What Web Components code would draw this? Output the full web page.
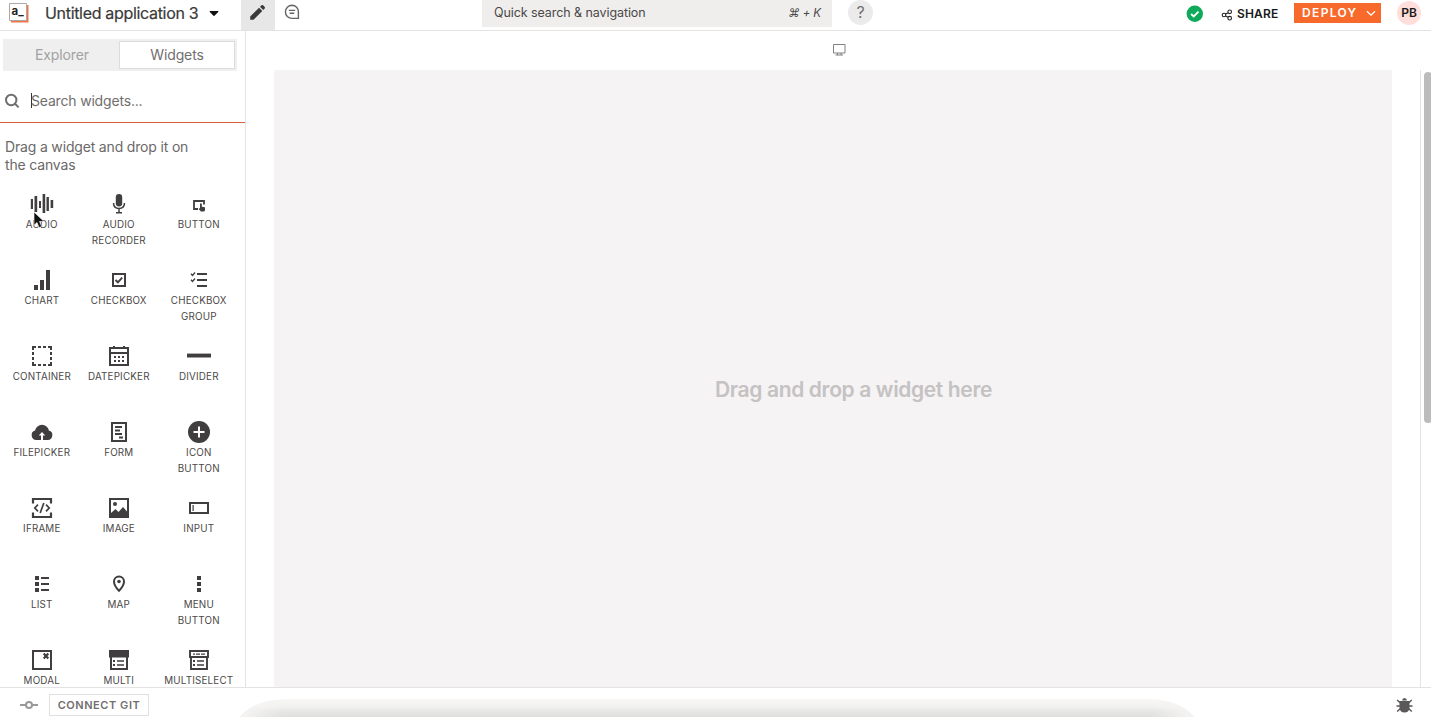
<!DOCTYPE html>
<html lang="en">
<head>
<meta charset="utf-8">
<title>Untitled application 3</title>
<style>
html,body{margin:0;height:100%;overflow:hidden;background:#fff}
body{font-family:Inter,"Open Sans",sans-serif;color:#4b4848}
</style>
</head>
<body>
<app-editor></app-editor>
<script>
const define = (name, html) => customElements.define(name, class extends HTMLElement {
  constructor() {
    super();
    const t = document.createElement('template');
    t.innerHTML = html;
    this.attachShadow({mode: 'open'}).append(t.content.cloneNode(true));
  }
});

define('app-header', `
<style>
:host{display:flex;height:30px;border-bottom:1px solid #e3e3e3;flex:none;background:#fff;overflow:hidden}
svg{display:block;flex:none}
.left{display:flex;width:482px;flex:none}
.logo{margin:3px 0 0 9px}
.name{margin-left:16px;width:154px;font-size:16px;line-height:27px;color:#393939;-webkit-text-stroke:.2px #393939;white-space:nowrap;letter-spacing:-.32px}
.caret{margin:11px 0 0 10px}
.edit{margin-left:22px;width:34px;height:30px;background:#e7e7e7}
.chat{margin:4px 0 0 9px}
.search{display:flex;justify-content:space-between;box-sizing:border-box;width:350px;height:27px;background:#efeeed;padding:0 11px 0 12px;font-size:12.5px;line-height:26px;letter-spacing:-.08px;color:#4b4848;white-space:nowrap}
.search i{font-size:11.5px;letter-spacing:-.1px}
.help{margin-left:16px;width:25px;height:25px;border-radius:50%;background:#ebebeb;font-size:16px;line-height:25px;text-align:center;color:#716e6e}
.right{display:flex;margin-left:auto}
.ok{margin-top:5px}
.share-icon{margin:9px 0 0 18px}
.share{margin-left:4px;width:42px;font-size:12px;font-weight:600;line-height:28px;letter-spacing:.15px;color:#191919}
.deploy{display:flex;box-sizing:border-box;margin:3px 0 0 15px;width:87px;height:20px;background:#f86a2b;color:#fff;font-size:12px;font-weight:600;line-height:20px;letter-spacing:1.35px;padding-left:8px}
.deploy svg{margin:7px 5px 0 auto}
.avatar{width:24px;height:24px;border-radius:50%;background:#ffdedb;margin:1px 10px 0 16px;font-size:12px;font-weight:600;line-height:24px;text-align:center;color:#191919}
</style>
<div class="left">
<svg class="logo" width="20" height="20"><path d="M2 2h17.500v17.500H2z" fill="#f3744a"/><path d="M.5.5h17v17H.5z" fill="#fff" stroke="#a9a9a9"/><text x="2.500" y="12" font-family="Inter,sans-serif" font-size="11.500" font-weight="700" fill="#222">a_</text></svg>
<div class="name">Untitled application 3</div>
<svg class="caret" width="10" height="6"><path d="M1.2 0h7.6q1.2 0 .4 1L5.8 4.6q-.8.8-1.6 0L.8 1Q0 0 1.2 0z" fill="#111"/></svg>
<div class="edit"><svg width="34" height="30"><path d="M9.2 19.8v-3.3l8.9-8.8 3.2 3.2-8.8 8.9zM19 6.8l1.5-1.5q.8-.7 1.6 0l1.6 1.6q.7.8 0 1.6L22.2 10z" fill="#3b3939"/></svg></div>
<svg class="chat" width="16" height="16" fill="none" stroke="#676464" stroke-width="1.4"><path d="M8 1.2a6.6 6.6 0 1 0 0 13.2h6.4V8A6.5 6.5 0 0 0 8 1.2zM4.8 6.4h6.4M5.6 9.3h4.6"/></svg>
</div>
<div class="search"><span>Quick search &amp; navigation</span><i>⌘ + K</i></div>
<div class="help">?</div>
<div class="right">
<svg class="ok" width="17" height="17"><circle cx="8.8" cy="8.8" r="8.2" fill="#0ea95b"/><path d="M5.1 9l2.6 2.5 4.8-4.8" fill="none" stroke="#fff" stroke-width="1.8"/></svg>
<svg class="share-icon" width="12" height="12" fill="none" stroke="#222" stroke-width="1.1"><circle cx="3" cy="6" r="1.8"/><circle cx="8.700" cy="2.8" r="1.8"/><circle cx="8.700" cy="9.2" r="1.8"/><path d="M4.6 5.1l2.5-1.4M4.6 6.9l2.5 1.4"/></svg>
<div class="share">SHARE</div>
<div class="deploy">DEPLOY<svg width="10" height="7"><path d="M1 1.2l4 4 4-4" fill="none" stroke="#fff" stroke-width="1.3"/></svg></div>
<div class="avatar">PB</div>
</div>`);

const icons = {
  audio: '<path d="M.8 7H3v10H.8zM4.5 4h2.700v16H4.500zM9 9h2v7H9zM12.600 2h2.600v19h-2.600zM16.500 5h2.400v14h-2.400zM20.600 8H23.200v8h-2.600z"/>',
  recorder: '<rect x="8.800" y="2" width="6.400" height="12.500" rx="3.200"/><path d="M6.500 11q.2 5.500 5.500 5.500t5.500-5.500M12 16.500v4M9 20.800h6" fill="none" stroke="#403e3e" stroke-width="1.500"/>',
  button: '<path d="M11 17H7V9h10v3.500" fill="none" stroke="#403e3e" stroke-width="1.800"/><path d="M13 11.500h1.800v3.200l3.200.6v3l-.8 1.200h-3.200l-2.400-2.500.6-.8.8.4z"/>',
  chart: '<path d="M4 17h4v5H4zM10 12h4v10h-4zM16 2h4v20h-4z"/>',
  checkbox: '<path d="M6 6h12v12H6z" fill="none" stroke="#403e3e" stroke-width="2"/><path d="M8.500 12l2.400 2.300 4.300-4.600" fill="none" stroke="#403e3e" stroke-width="1.900"/>',
  checks: '<path d="M10 5h10v2H10zM10 11h10v2H10zM10 17h10v2H10z"/><path d="M4 5.800l1.500 1.600L8 4.500M4 11.800l1.500 1.600L8 10.500" fill="none" stroke="#403e3e" stroke-width="1.400"/>',
  container: '<path d="M2 2h4v2H4v2H2zM8 2h3v2H8zM13 2h3v2h-3zM18 2h4v4h-2V4h-2zM2 8h2v3H2zM2 13h2v3H2zM20 8h2v3h-2zM20 13h2v3h-2zM2 18h2v2h2v2H2zM8 20h3v2H8zM13 20h3v2h-3zM18 20h2v-2h2v4h-4z"/>',
  date: '<path d="M3 4h18v17H3zM3 9h18" fill="none" stroke="#403e3e" stroke-width="2"/><path d="M6 2h2v3H6zM16 2h2v3h-2zM7 12h2v2H7zM11 12h2v2h-2zM15 12h2v2h-2zM7 16h2v2H7zM11 16h2v2h-2zM15 16h2v2h-2z"/>',
  divider: '<path d="M0 9.600h24v3.900H0z"/>',
  file: '<path d="M6.200 20a4.800 4.800 0 0 1-1.100-9.400 7 7 0 0 1 13.800 0A4.800 4.800 0 0 1 17.800 20z"/><path d="M12 20v-6" stroke="#fff" stroke-width="2"/><path d="M8.800 15.500L12 12l3.200 3.500z" fill="#fff"/>',
  form: '<path d="M5 3h14v18H5z" fill="none" stroke="#403e3e" stroke-width="2"/><path d="M8 6h7v2H8zM8 9.500h5v2H8zM8 13h7v2H8zM12 16.500h4v2h-4z"/>',
  plus: '<circle cx="12" cy="12" r="11"/><path d="M12 6.500v11M6.500 12h11" stroke="#fff" stroke-width="2"/>',
  iframe: '<path d="M3 7.500V3h18v4.500M3 16.500V21h18v-4.500" fill="none" stroke="#403e3e" stroke-width="2.200"/><path d="M8 8.700L4.800 12 8 15.300M16 8.700l3.200 3.300-3.200 3.300M13.800 7l-3.600 10" fill="none" stroke="#403e3e" stroke-width="1.700"/>',
  image: '<path d="M2 2h20v20H2zM4 4v13l4.500-4 3 3 4.500-5 4 4.500V4z" fill-rule="evenodd"/><circle cx="8" cy="8" r="2"/>',
  input: '<path d="M3 7h18v10H3z" fill="none" stroke="#403e3e" stroke-width="2"/><path d="M5.500 9h1.200v6H5.500z"/>',
  list: '<path d="M5 4h4v4H5zM5 10h4v4H5zM5 16h4v4H5zM11 5h8v2h-8zM11 11h8v2h-8zM11 17h8v2h-8z"/>',
  map: '<path d="M12 18.800Q7 13.700 7 9.500a5 5 0 0 1 10 0Q17 13.700 12 18.800z" fill="none" stroke="#403e3e" stroke-width="2"/><circle cx="12" cy="9.500" r="1.800"/>',
  menu: '<path d="M10 4h4v4h-4zM10 10h4v4h-4zM10 16h4v4h-4z"/>',
  modal: '<path d="M3 3h18v18H3z" fill="none" stroke="#403e3e" stroke-width="2"/><path d="M13.700 5.500l4.600 5M18.300 5.500l-4.600 5" stroke="#403e3e" stroke-width="2.200"/>',
  multi: '<path d="M2 2h20v7.500H2z"/><path d="M4 8v13h16V8" fill="none" stroke="#403e3e" stroke-width="2"/><path d="M6 12h2v2H6zM10 12.300h7v1.400h-7zM6 16h2v2H6zM10 16.300h7v1.400h-7z"/>',
  select: '<path d="M3 3h18v6H3zM4 9v12h16V9" fill="none" stroke="#403e3e" stroke-width="1.900"/><path d="M6 5.400h2v1.400H6zM9 5.400h4v1.400H9zM14 5.400h4v1.400h-4zM6 12h2v2H6zM10 12.300h7v1.400h-7zM6 16h2v2H6zM10 16.300h7v1.400h-7z"/>'
};
customElements.define('widget-card', class extends HTMLElement {
  constructor() {
    super();
    this.attachShadow({mode: 'open'}).innerHTML = `
<style>
:host{display:block;text-align:center;font-size:9.8px;line-height:16px;letter-spacing:.2px;color:#4b4848}
svg{display:block;margin:0 auto;fill:#403e3e}
div{white-space:pre-line;padding-top:1px;margin-right:.4px}
</style>
<svg width="24" height="24" viewBox="0 0 24 24">${icons[this.getAttribute('icon')]}</svg><div><slot></slot></div>`;
  }
});

define('widget-sidebar', `
<style>
:host{display:block;width:245px;flex:none;border-right:1px solid #e3e3e3;overflow:hidden;position:relative}
.tabs{display:flex;box-sizing:border-box;margin:8px 0 0 3px;width:234px;height:32px;padding:2px 2px 2px 0;background:#efefef;font-size:14px;line-height:28px;text-align:center}
.tabs span{box-sizing:border-box;width:116px;color:#a2a2a2;letter-spacing:-.13px;padding-left:2px}
.tabs .on{color:#716e6e;background:#fff;border:1px solid #dcdcd8;height:28px;line-height:26px;padding:0}
.search{display:flex;box-sizing:border-box;margin-top:9px;height:43px;border-bottom:1.500px solid #db6038;font-size:14px;line-height:42px;color:#716e6e;letter-spacing:-.18px}
.search svg{margin:13px 0 0 4px}
.search b{width:1px;height:15px;margin:13px -1px 0 11px;background:#333}
p{margin:15px 0 0 5px;width:195px;font-size:14px;line-height:18px;letter-spacing:-.17px;color:#6b6868}
.grid{display:grid;grid-template-columns:76px 78px 82px;grid-auto-rows:76px;padding-left:4px;margin-top:18px}
.cursor{position:absolute;left:33px;top:180px}
</style>
<div class="tabs"><span>Explorer</span><span class="on">Widgets</span></div>
<div class="search"><svg width="16" height="16" fill="none" stroke="#716e6e" stroke-width="2"><circle cx="7.200" cy="7" r="5.200"/><path d="M11 10.800l3.600 3.600"/></svg><b></b><span>Search widgets...</span></div>
<p>Drag a widget and drop it on<br>the canvas</p>
<div class="grid">
<widget-card icon="audio">AUDIO</widget-card><widget-card icon="recorder">AUDIO
RECORDER</widget-card><widget-card icon="button">BUTTON</widget-card>
<widget-card icon="chart">CHART</widget-card><widget-card icon="checkbox">CHECKBOX</widget-card><widget-card icon="checks">CHECKBOX
GROUP</widget-card>
<widget-card icon="container">CONTAINER</widget-card><widget-card icon="date">DATEPICKER</widget-card><widget-card icon="divider">DIVIDER</widget-card>
<widget-card icon="file">FILEPICKER</widget-card><widget-card icon="form">FORM</widget-card><widget-card icon="plus">ICON
BUTTON</widget-card>
<widget-card icon="iframe">IFRAME</widget-card><widget-card icon="image">IMAGE</widget-card><widget-card icon="input">INPUT</widget-card>
<widget-card icon="list">LIST</widget-card><widget-card icon="map">MAP</widget-card><widget-card icon="menu">MENU
BUTTON</widget-card>
<widget-card icon="modal">MODAL</widget-card><widget-card icon="multi">MULTI</widget-card><widget-card icon="select">MULTISELECT</widget-card>
</div>
<svg class="cursor" width="12" height="18"><path d="M1 1v13.200l3-2.700 2.200 5 2.500-1-2.200-5H11z" fill="#111" stroke="#fff" stroke-width=".6"/></svg>`);

define('app-canvas', `
<style>
:host{display:flex;flex-direction:column;flex:1;min-width:0}
.device{display:flex;height:39px}
.device svg{margin:12px 0 0 587px}
.row{display:flex;flex:1;min-height:0}
.drop{display:flex;flex:none;align-items:center;justify-content:center;box-sizing:border-box;margin-left:28px;width:1118px;background:#f5f3f4;padding:22px 0 0 41px;font-size:21px;font-weight:600;color:#c4c2c2;letter-spacing:-.36px}
.scroll{box-sizing:border-box;margin-left:28px;flex:1;min-width:0;overflow:hidden;border-left:1px solid #e3e3e3;padding:2px 0 0 3px}
.thumb{width:8px;height:351px;border-radius:4px;background:#bcbcbc}
</style>
<div class="device"><svg width="13" height="13" fill="none" stroke="#828080"><path d="M.5 1.500h11.500v8.500H.5zM4.500 10v2M8 10v2M2.500 12h7.500"/></svg></div>
<div class="row"><div class="drop"><span>Drag and drop a widget here</span></div><div class="scroll"><div class="thumb"></div></div></div>`);

define('app-footer', `
<style>
:host{display:flex;box-sizing:border-box;height:30px;flex:none;border-top:1px solid #e3e3e3;background:#fff;position:relative;overflow:hidden}
.git{margin:11px 0 0 20px}
.connect{box-sizing:border-box;margin:6px 0 0 11px;width:100px;height:22px;border:1px solid #e0e0e0;font-size:11px;font-weight:600;letter-spacing:.55px;line-height:21px;text-align:center;color:#716e6e;white-space:nowrap}
.bug{margin:9px 18px 0 auto}
.shade{position:absolute;left:236px;bottom:0}
</style>
<svg class="git" width="18" height="12" fill="none" stroke="#9a9898" stroke-width="2"><circle cx="9" cy="6" r="3"/><path d="M0 6h6M12 6h6"/></svg>
<div class="connect">CONNECT GIT</div>
<svg class="bug" width="17" height="17"><path d="M6 3.500Q6.300 1 8.500 1T11 3.500zM3.500 4h10v7q-.7 4.500-5 4.500t-5-4.500z" fill="#5a5858"/><path d="M4.500 6L1.200 3M12.500 6l3.300-3M4.500 9H.5M12.500 9h4M4.500 11.500l-3.300 3M12.500 11.500l3.300 3" stroke="#5a5858" stroke-width="1.500"/></svg>
<svg class="shade" width="962" height="18"><defs><linearGradient id="g" x2="0" y2="1"><stop offset="0" stop-color="#f8f7f6"/><stop offset=".45" stop-color="#f1f1f0"/><stop offset=".65" stop-color="#e7e7e6"/><stop offset="1" stop-color="#dfdfde"/></linearGradient><linearGradient id="f"><stop offset="0" stop-color="#f6f5f4"/><stop offset=".045" stop-color="#f6f5f4" stop-opacity="0"/><stop offset=".955" stop-color="#f6f5f4" stop-opacity="0"/><stop offset="1" stop-color="#f6f5f4"/></linearGradient></defs><path d="M4 18Q18 1 48 0h866q30 1 44 18z" fill="url(#g)"/><path d="M4 18Q18 1 48 0h866q30 1 44 18z" fill="url(#f)"/></svg>`);

define('app-editor', `
<style>:host{display:flex;flex-direction:column;width:1431px;height:717px;overflow:hidden}.main{display:flex;flex:1;min-height:0}</style>
<app-header></app-header><div class="main"><widget-sidebar></widget-sidebar><app-canvas></app-canvas></div><app-footer></app-footer>`);
</script>
</body>
</html>
